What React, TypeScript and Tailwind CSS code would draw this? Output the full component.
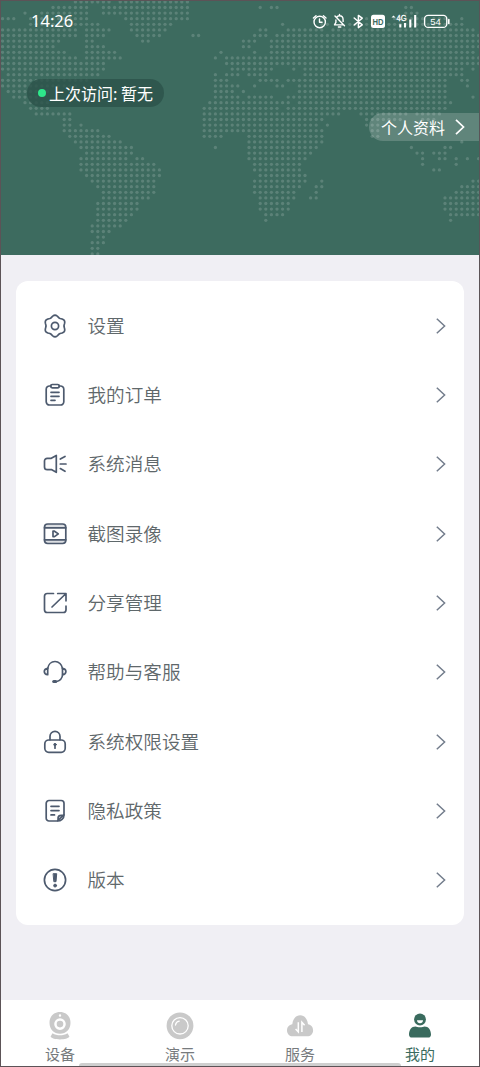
import React from 'react';

const STEP = 5.6;

// Dotted world map: one entry per dot row, each pair is a [from, to] run of columns
const MAP_ROWS: number[][][] = [
    [[13, 19], [21, 33]],
    [[9, 15], [18, 33], [46, 46], [48, 49], [72, 73]],
    [[4, 4], [7, 15], [18, 33], [72, 74]],
    [[0, 2], [5, 15], [22, 33], [64, 65], [70, 75], [77, 79], [82, 82]],
    [[5, 17], [23, 30], [50, 50], [57, 58], [62, 82]],
    [[0, 13], [15, 19], [23, 29], [46, 47], [51, 57], [59, 84]],
    [[0, 13], [15, 18], [24, 28], [34, 35], [45, 47], [49, 85]],
    [[0, 10], [15, 16], [25, 26], [43, 45], [48, 85]],
    [[0, 9], [15, 18], [43, 44], [48, 85]],
    [[0, 11], [15, 20], [39, 39], [45, 45], [48, 84]],
    [[0, 13], [15, 21], [38, 38], [40, 85]],
    [[0, 18], [40, 85]],
    [[0, 18], [41, 48], [52, 52], [54, 82], [84, 84]],
    [[1, 17], [38, 38], [40, 42], [44, 47], [54, 82]],
    [[0, 15], [38, 40], [46, 49], [51, 79], [82, 83]],
    [[0, 13], [38, 42], [45, 45], [49, 50], [53, 79], [83, 83]],
    [[1, 8], [38, 41], [43, 43], [53, 79]],
    [[2, 6], [38, 42], [44, 48], [51, 79], [84, 84]],
    [[4, 8], [37, 51], [53, 80]],
    [[5, 8], [36, 49], [51, 79]],
    [[6, 12], [36, 60], [64, 72], [74, 78]],
    [[11, 12], [36, 57], [65, 71], [75, 77]],
    [[11, 12], [14, 14], [36, 56], [58, 58], [65, 67]],
    [[11, 17], [36, 57], [66, 67]],
    [[12, 19], [36, 39], [44, 57], [66, 67]],
    [[13, 21], [44, 57], [82, 82]],
    [[14, 23], [38, 38], [44, 56], [73, 73], [79, 80]],
    [[15, 23], [44, 55], [74, 75], [77, 79]],
    [[14, 22], [24, 25], [44, 54], [75, 75], [78, 79], [81, 81], [83, 83], [85, 85]],
    [[14, 27], [45, 53], [75, 75], [81, 81]],
    [[14, 28], [45, 53], [77, 78]],
    [[15, 28], [46, 54]],
    [[16, 27], [45, 54], [57, 57], [84, 85]],
    [[17, 27], [45, 53], [56, 57], [82, 85]],
    [[18, 27], [45, 52], [56, 56], [81, 85]],
    [[18, 26], [46, 52], [55, 56], [79, 85]],
    [[17, 24], [46, 51], [79, 85]],
    [[17, 24], [46, 51], [79, 85]],
    [[17, 23], [47, 50], [80, 85]],
    [[17, 22], [47, 47], [80, 80]],
    [[16, 21]],
    [[16, 19]],
    [[17, 18]],
    [[16, 18]],
    [[16, 17]],
    [[16, 17]],
];

// Six soft lobes around the centre of a 24px box
const GEAR_PATH =
    Array.from({ length: 72 }, (_, i) => {
        const a = (i / 72) * Math.PI * 2;
        const r = 9.9 + 0.9 * Math.cos(6 * a);
        return `${i ? 'L' : 'M'}${(12 + r * Math.sin(a)).toFixed(2)} ${(12 - r * Math.cos(a)).toFixed(2)}`;
    }).join('') + 'z';

function DotMap() {
    return (
        <svg className="absolute inset-0 w-full h-full" viewBox="1 1 478 254" fill="#fff" fillOpacity={0.16}>
            {MAP_ROWS.map((runs, r) =>
                runs.map(([from, to]) =>
                    Array.from({ length: to - from + 1 }, (_, i) => (
                        <circle key={`${r}-${from + i}`} cx={2.6 + (from + i) * STEP} cy={1.9 + r * STEP} r={1.65} />
                    ))
                )
            )}
        </svg>
    );
}

function StatusIcons() {
    return (
        <svg className="w-[140px] h-[20px]" viewBox="311 11 140 20" fill="none" stroke="#fff" strokeWidth="1.4" strokeLinecap="round" strokeLinejoin="round">
            {/* alarm */}
            <circle cx="319.7" cy="22" r="5.7" />
            <path d="M319.5 19v3.2h2.6M313.4 18l2.6-2.3M326 18l-2.6-2.3" />
            {/* muted bell */}
            <path d="M336.6 17.5c.8-1.2 1.8-1.7 2.9-1.7 2.2 0 3.6 1.6 3.6 4v1.6M335.9 20v2.4l-1.4 2.5h8.2M338.4 27h2.4M335 16l9.5 9.8M339.5 14.5v1" strokeWidth="1.4" />
            {/* bluetooth */}
            <path d="M354.2 18l8 6.8-3.8 2.8V15.4l3.8 2.8-8 6.8" strokeWidth="1.5" />
            <rect x="371" y="14.8" width="14" height="13.2" rx="2.5" fill="#fff" stroke="none" />
            <text x="378" y="24.8" textAnchor="middle" fontSize="9" fontWeight="bold" textLength="11" lengthAdjust="spacingAndGlyphs" fill="#3d6b5f" stroke="none" className="font-['Liberation_Sans',sans-serif]">HD</text>
            <path d="M391.5 17.6l2-2.2 2 2.200z" fill="#fff" stroke="none" />
            <text x="396.5" y="21" fontSize="8.4" fill="#fff" stroke="#fff" strokeWidth=".3" textLength="10" lengthAdjust="spacingAndGlyphs" className="font-['Liberation_Sans',sans-serif]">4G</text>
            <path d="M400.3 24.300v3.200M405 23v4.500M410.300 19.500v8M415.200 15v12.500" strokeWidth="2.100" strokeLinecap="butt" />
            <rect x="424.6" y="15.400" width="22.200" height="12" rx="3.500" />
            <path d="M448.800 19.600v3.800" strokeWidth="1.600" />
            <text x="435.500" y="24.800" textAnchor="middle" fontSize="9.500" fill="#fff" stroke="none" className="font-['Liberation_Sans',sans-serif]">54</text>
        </svg>
    );
}

const menu: { label: string; icon: React.ReactNode }[] = [
    {
        label: '设置',
        icon: (
            <>
                <path d={GEAR_PATH} />
                <circle cx="12" cy="12" r="3.6" />
            </>
        ),
    },
    {
        label: '我的订单',
        icon: (
            <>
                <path d="M8 3H6.5a3.3 3.3 0 0 0-3.3 3.3v12.4A3.3 3.3 0 0 0 6.5 22h11a3.3 3.3 0 0 0 3.3-3.3V6.3A3.3 3.3 0 0 0 17.5 3H16" />
                <rect x="7.7" y="1.5" width="8.6" height="3.3" rx="1.6" />
                <path d="M8 9.300h8M8 13.300h8M8 17.300h4" />
            </>
        ),
    },
    {
        label: '系统消息',
        icon: (
            <>
                <path d="M13.300 3.500v16.800l-5-2.700H4.200a2.700 2.700 0 0 1-2.700-2.700V9a2.700 2.700 0 0 1 2.700-2.700h4.100z" />
                <path d="M17.300 7l4.700-2.500M17.300 12H23M17.300 16.600l4.700 2.700" />
            </>
        ),
    },
    {
        label: '截图录像',
        icon: (
            <>
                <path d="M1.500 6V5a3 3 0 0 1 3-3h15a3 3 0 0 1 3 3v1zM1.500 18h21v.5a3 3 0 0 1-3 3h-15a3 3 0 0 1-3-3z" fill="#4d5a6e" fillOpacity="0.2" stroke="none" />
                <rect x="1.500" y="2" width="21.300" height="19.500" rx="3.200" />
                <path d="M1.500 5.800h21.300M1.500 17.800h21.300M10 9.200v5.400h1.500l3.800-2.700-3.800-2.700z" />
            </>
        ),
    },
    {
        label: '分享管理',
        icon: (
            <path d="M10.500 2.500H4.300a2.800 2.800 0 0 0-2.800 2.800v13.400a2.800 2.800 0 0 0 2.800 2.800h15.900a2.800 2.800 0 0 0 2.800-2.800v-3.500M14.700 2.500H23v7.300M22.500 3L9 16" />
        ),
    },
    {
        label: '帮助与客服',
        icon: (
            <>
                <path d="M4.700 8.500C5.300 4.500 8.200 1.500 12 1.500s6.900 3 7.500 7M19.700 14.500c-.5 3.800-2.700 6.200-6 7" />
                <path d="M4.700 8.300v6.400c-1.900-.2-3.400-1.500-3.400-3.200s1.500-3 3.400-3.200zM19.500 8.300v6.400c1.900-.2 3.400-1.500 3.400-3.200s-1.500-3-3.400-3.200z" />
                <path d="M10.700 21.600h2" strokeWidth="3" />
            </>
        ),
    },
    {
        label: '系统权限设置',
        icon: (
            <>
                <rect x="1.800" y="10" width="20.400" height="12.300" rx="4" />
                <path d="M7 9.700V6.300a5 5 0 0 1 10 0v3.400" />
                <circle cx="12" cy="14.600" r="1.200" fill="#4d5a6e" strokeWidth="1" />
                <path d="M12 15v3.200" />
            </>
        ),
    },
    {
        label: '隐私政策',
        icon: (
            <>
                <path d="M14.500 22H6a2.800 2.800 0 0 1-2.800-2.800V4.300A2.800 2.800 0 0 1 6 1.500h12.200A2.800 2.800 0 0 1 21 4.300v11.600c0 3.600-3 6.100-6.500 6.100z" />
                <path d="M14.700 21.700c.6-.8.3-2 .4-3 .2-1.600 1.500-2.300 3-2.300 1 0 2 .1 2.700-.4z" fill="#4d5a6e" fillOpacity="0.2" />
                <path d="M8 7.300h8M8 11.600h8M8 15.900h3.500" />
            </>
        ),
    },
    {
        label: '版本',
        icon: (
            <>
                <circle cx="12" cy="12" r="10.600" />
                <path d="M10.500 5.700h3.200l-.7 8h-1.800z" fill="#4d5a6e" strokeWidth="1" />
                <circle cx="12.100" cy="17.600" r="1.500" fill="#4d5a6e" strokeWidth=".8" />
            </>
        ),
    },
];

const tabs: { label: string; active?: boolean; icon: React.ReactNode }[] = [
    {
        label: '设备',
        icon: (
            <>
                <path fillRule="evenodd" d="M15 1c6 0 10.500 4 10.500 10.800S21 22.800 15 22.800 4.500 18.500 4.500 11.800 9 1 15 1zm0 2.300a1.200 1.200 0 1 0 0 2.400 1.200 1.200 0 0 0 0-2.400zm0 4a5.800 5.800 0 1 0 0 11.600 5.800 5.800 0 0 0 0-11.600z" />
                <circle cx="15" cy="13.100" r="3.300" />
                <path d="M7.500 22.300c4.500 2.700 10.500 2.700 15 0l1.900 3.200c-1 2-5 2.900-9.400 2.900s-8.400-.9-9.400-2.900z" />
            </>
        ),
    },
    {
        label: '演示',
        icon: (
            <>
                <circle cx="15" cy="14.800" r="13.400" />
                <circle cx="15" cy="14.800" r="8.200" fill="none" stroke="#fff" strokeWidth="1.300" />
                <path d="M10.500 14c.3-2.200 1.500-3.400 3.700-3.800" fill="none" stroke="#fff" strokeWidth="1.300" strokeLinecap="round" />
            </>
        ),
    },
    {
        label: '服务',
        icon: (
            <>
                <path d="M8 25.300c-3.600 0-6-2.700-6-5.900 0-3.300 2.300-5.700 5.300-6.100C7.700 8 10.900 4.300 15.200 4.300s7.300 3.700 7.800 9c3 .4 5.100 2.900 5.100 6.100 0 3.200-2.600 5.900-6 5.900z" />
                <path d="M13.300 11.300v9.600l-2.700-3M16.900 20.900v-9.600l2.700 3" fill="none" stroke="#fff" strokeWidth="1.500" />
            </>
        ),
    },
    {
        label: '我的',
        active: true,
        icon: (
            <>
                <circle cx="15" cy="8.500" r="5.900" />
                <path d="M12 9.200h6c0 1.900-1.300 3-3 3s-3-1.100-3-3z" fill="#fff" />
                <path d="M4 23.500c0-4.600 2.500-8.100 6.500-8.100.9 0 2.500.8 4.500.8s3.600-.8 4.500-.8c4 0 6.500 3.500 6.500 8.100 0 2-1 3.100-3 3.100H7c-2 0-3-1.100-3-3.100z" />
            </>
        ),
    },
];

export default function App() {
    return (
        <div className="w-[480px] h-[1067px] flex flex-col overflow-hidden border border-[#5c5357] bg-[#f0eff4] font-['Noto_Sans_CJK_SC',sans-serif]">
            <header className="relative h-[254px] shrink-0 bg-[#3d6b5f] text-white">
                <DotMap />
                <div className="relative flex items-center justify-between pl-[30px] pr-7 pt-[10px] h-[30px]">
                    <span className="text-[16.5px] leading-5 font-normal font-['Noto_Sans',sans-serif]">14:26</span>
                    <StatusIcons />
                </div>
                <div className="relative mt-12 ml-[26px] flex items-center w-[137px] h-7 rounded-full bg-[#2c524a]/80 pl-[11px]">
                    <span className="w-2 h-2 rounded-full bg-[#2ee88b]" />
                    <span className="ml-[3px] text-[16px] leading-7 whitespace-nowrap">上次访问: 暂无</span>
                </div>
                <div className="relative mt-1.5 ml-auto flex items-center w-[110px] h-7 rounded-l-full bg-white/18 pl-3">
                    <span className="text-[16px] leading-7">个人资料</span>
                    <svg className="ml-2.5 w-[10px] h-[16px]" viewBox="0 0 10 16" fill="none" stroke="#fff" strokeWidth="1.7">
                        <path d="M1 .8L8.500 8 1 15.200" />
                    </svg>
                </div>
            </header>

            <main className="flex-1 px-[15px] pt-[26px]">
                <ul className="h-[644px] rounded-xl bg-white py-[10px] flex flex-col">
                    {menu.map((item) => (
                        <li key={item.label} className="flex-1 flex items-center pl-[26.5px] pr-[18px]">
                            <svg className="w-6 h-6" viewBox="0 0 24 24" fill="none" stroke="#4d5a6e" strokeWidth="1.7" strokeLinecap="round" strokeLinejoin="round">
                                {item.icon}
                            </svg>
                            <span className="ml-[21px] mb-0.5 flex-1 text-[18.6px] leading-7 font-[350] text-[#5f686b]">{item.label}</span>
                            <svg className="w-[10px] h-4" viewBox="0 0 10 16" fill="none" stroke="#737d8c" strokeWidth="1.5">
                                <path d="M.8.8L8.600 8 .8 15.200" />
                            </svg>
                        </li>
                    ))}
                </ul>
            </main>

            <nav className="relative h-[66px] shrink-0 grid grid-cols-4 bg-white -mx-px">
                {tabs.map((tab) => (
                    <div key={tab.label} className={`flex flex-col items-center pt-[11px] ${tab.active ? 'text-[#3a6b5e]' : 'text-[#c9c9c9]'}`}>
                        <svg className="w-[30px] h-[30px]" viewBox="0 0 30 30" fill="currentColor">
                            {tab.icon}
                        </svg>
                        <span className={`mt-[3px] text-[15px] leading-5 ${tab.active ? 'text-[#3a6b5e]' : 'text-[#777b7e]'}`}>{tab.label}</span>
                    </div>
                ))}
                <div className="absolute bottom-0 left-[79px] w-[322px] h-[3px] rounded-t bg-[#cfcfcf]" />
            </nav>
        </div>
    );
}
